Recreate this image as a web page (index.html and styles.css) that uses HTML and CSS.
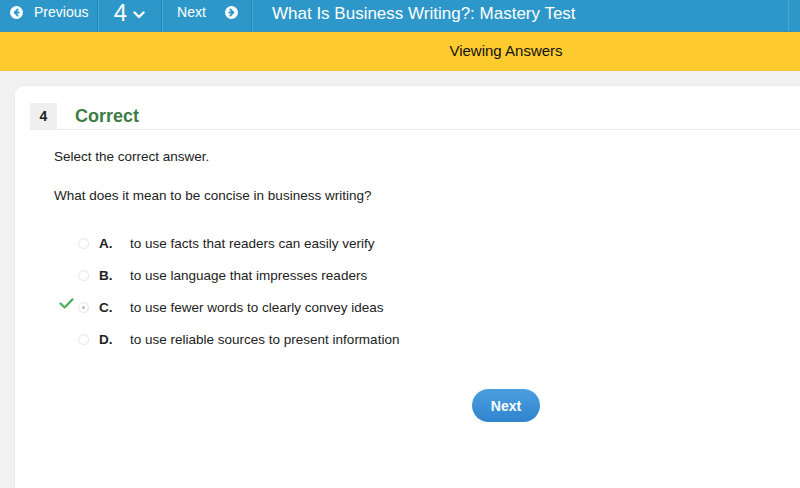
FILE: index.html
```html
<!DOCTYPE html>
<html lang="en">
<head>
  <meta charset="utf-8" />
  <title>What Is Business Writing?: Mastery Test</title>
  <link rel="stylesheet" href="styles.css">
</head>
<body>
  <div class="topbar">
    <div class="nav-btn prev">
      <svg class="circ" viewBox="0 0 16 16" width="13" height="13"><circle cx="8" cy="8" r="8" fill="#fff"/><path d="M9.5 4.2L5.7 8l3.8 3.8M5.9 8h5" stroke="#2e97c9" stroke-width="2.2" fill="none" stroke-linecap="round" stroke-linejoin="round"/></svg>
      <span>Previous</span>
    </div>
    <div class="nav-btn num">
      <span class="big">4</span>
      <svg viewBox="0 0 12 8" width="12" height="8"><path d="M1.5 1.5L6 6l4.5-4.5" stroke="#fff" stroke-width="2.4" fill="none" stroke-linecap="round" stroke-linejoin="round"/></svg>
    </div>
    <div class="nav-btn next">
      <span>Next</span>
      <svg class="circ" viewBox="0 0 16 16" width="13" height="13"><circle cx="8" cy="8" r="8" fill="#fff"/><path d="M6.5 4.2L10.3 8l-3.8 3.8M10.1 8h-5" stroke="#2e97c9" stroke-width="2.2" fill="none" stroke-linecap="round" stroke-linejoin="round"/></svg>
    </div>
    <div class="title">What Is Business Writing?: Mastery Test</div>
    <div class="edge"></div>
  </div>
  <div class="status">Viewing Answers</div>

  <div class="page">
    <div class="card">
      <div class="head">
        <span class="qnum">4</span>
        <span class="verdict">Correct</span>
      </div>
      <div class="body">
        <p class="hint">Select the correct answer.</p>
        <p class="question">What does it mean to be concise in business writing?</p>
        <ul class="options">
          <li><span class="mark"></span><span class="radio"></span><b>A.</b><span>to use facts that readers can easily verify</span></li>
          <li><span class="mark"></span><span class="radio"></span><b>B.</b><span>to use language that impresses readers</span></li>
          <li><span class="mark"><svg viewBox="0 0 16 12" width="15" height="11"><path d="M1.5 6l4.5 4.3L14.5 1.5" stroke="#4cae5a" stroke-width="2.4" fill="none" stroke-linecap="round" stroke-linejoin="round"/></svg></span><span class="radio on"></span><b>C.</b><span>to use fewer words to clearly convey ideas</span></li>
          <li><span class="mark"></span><span class="radio"></span><b>D.</b><span>to use reliable sources to present information</span></li>
        </ul>
        <div class="actions"><button class="next-btn">Next</button></div>
      </div>
    </div>
  </div>
</body>
</html>
```

FILE: styles.css
```css
/* base */
html, body { margin: 0; height: 100%; }
body {
  font-family: "Liberation Sans", Arial, sans-serif;
  background: #f1f1f1;
  overflow: hidden;
  color: #222;
}

/* top nav */
.topbar {
  display: flex; align-items: stretch;
  height: 31px;
  background: #2e97c9;
  border-bottom: 1px solid #3a8fb3;
  color: white;
}
.nav-btn {
  display: flex; align-items: center; justify-content: center;
  border-right: 1px solid #2787b6;
  box-shadow: 1px 0 0 #4aa6d2;
  font-size: 14px;
  padding-bottom: 7px;
  box-sizing: border-box;
}
.nav-btn.prev { width: 98px; gap: 11px; justify-content: flex-start; padding-left: 10px; }
.nav-btn.num { width: 64px; gap: 6px; padding-bottom: 5px; }
.nav-btn.num .big { font-size: 24px; }
.nav-btn.num svg { margin-top: 3px; }
.nav-btn.next { width: 90px; gap: 19px; padding-left: 2px; }
.title {
  flex: 1; font-size: 17px;
  display: flex; align-items: center;
  padding: 0 0 3px 20px;
}
.edge { width: 11px; border-left: 1px solid #4aa6d2; }

/* answer bar */
.status {
  height: 39px; line-height: 38px;
  background: #fecb2f;
  border-bottom: 1px solid #f2c43a;
  text-align: center; font-size: 15px; color: #111;
  padding-left: 212px;
  box-sizing: border-box;
}

/* card */
.page { padding: 14px 0 0 14px; height: calc(100% - 71px); box-sizing: border-box; }
.card {
  background: white;
  border-top-left-radius: 9px;
  border-top: 1px solid #ececec;
  border-left: 1px solid #ececec;
  height: 100%;
  padding: 17px 0 0 15px;
  box-sizing: border-box;
}
.head {
  display: flex; align-items: center;
  border-bottom: 1px solid #ebebeb;
  height: 26px;
}
.qnum {
  width: 27px; height: 26px; line-height: 26px;
  background: #efefef; text-align: center;
  font-size: 14px; font-weight: bold;
}
.verdict {
  margin-left: 18px; color: #3b7d44;
  font-size: 18px; font-weight: bold;
}
.body { padding-left: 24px; font-size: 13.5px; }
.hint { margin: 19px 0 0; }
.question { margin: 24px 0 0; }
.options { list-style: none; margin: 24px 0 0; padding: 0; }
.options li {
  display: flex; align-items: center;
  height: 32px;
}
.mark { width: 19px; display: flex; align-items: center; margin-left: 5px; margin-top: -8px; }
.radio {
  width: 11px; height: 11px; border-radius: 50%;
  border: 1px solid #e6e6e6;
  margin-right: 10px; box-sizing: border-box;
  position: relative;
}
.radio.on::after {
  content: ""; position: absolute; left: 3px; top: 3px;
  width: 3px; height: 3px; border-radius: 50%; background: #bbb;
}
.options b { width: 31px; }
.actions { padding: 34px 0 0 418px; }
.next-btn {
  width: 68px; height: 33px;
  border: none; border-radius: 17px;
  background: linear-gradient(#4b9fe0, #2f84cc);
  color: white; font: bold 14px "Liberation Sans", Arial, sans-serif;
}
```
